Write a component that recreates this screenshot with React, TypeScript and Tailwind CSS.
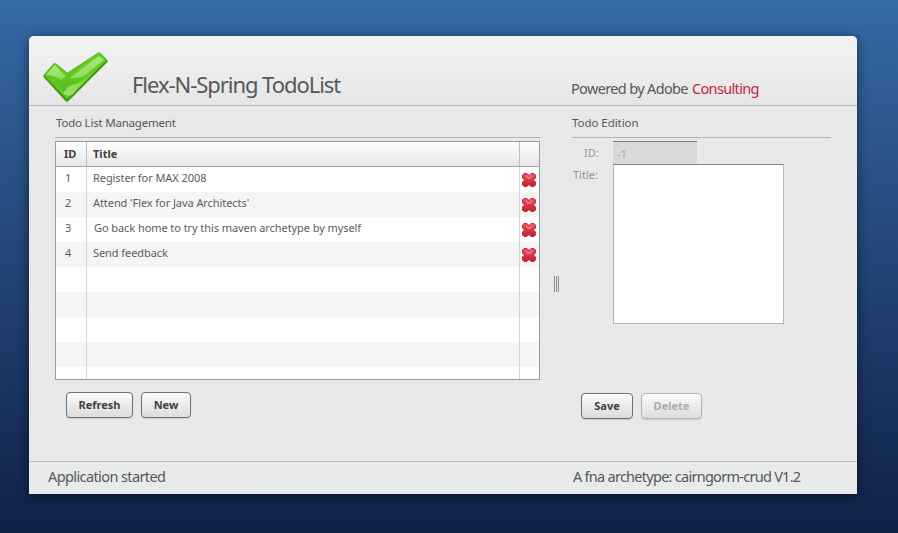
const font = { fontFamily: '"Noto Sans", "Open Sans", sans-serif' };

function CheckLogo() {
  return (
    <svg width="66" height="52" viewBox="0 0 66 52" className="block">
      <defs>
        <linearGradient id="g1" x1="0" y1="0" x2="0" y2="1">
          <stop offset="0" stopColor="#7fd640" />
          <stop offset="0.55" stopColor="#62c722" />
          <stop offset="1" stopColor="#56b814" />
        </linearGradient>
        <linearGradient id="g2" x1="0" y1="0" x2="0.4" y2="1">
          <stop offset="0" stopColor="#b9ea95" />
          <stop offset="1" stopColor="#8bdc55" />
        </linearGradient>
        <linearGradient id="g3" x1="0" y1="1" x2="1" y2="0">
          <stop offset="0" stopColor="#a8e87c" />
          <stop offset="1" stopColor="#6acd2b" />
        </linearGradient>
      </defs>
      <path d="M3 24 L12 14 L24 24 L56 3 L62 9 L24 47 Z" fill="#3f9a10" stroke="#3f9a10" strokeWidth="5" strokeLinejoin="round" />
      <path d="M3 23 L12 13 L24 23 L56 2 L62 8 L24 45 Z" fill="url(#g1)" stroke="#62c722" strokeWidth="3" strokeLinejoin="round" />
      <path d="M3 23 L12 13 L23 24 L18 28 Q11 23 3 23 Z" fill="url(#g2)" />
      <path d="M27 26 L56 4 L61 8 L41 24 Q33 27 27 26 Z" fill="url(#g2)" />
      <path d="M20 41 L26 34 Q38 32 48 21 L57 13 L29 43 Q24 45 20 41 Z" fill="url(#g3)" opacity="0.85" />
    </svg>
  );
}

function RedX() {
  return (
    <svg width="14" height="14" viewBox="0 0 14 14" className="block">
      <defs>
        <linearGradient id="x1" x1="0" y1="0" x2="0" y2="1">
          <stop offset="0" stopColor="#ee4d5c" />
          <stop offset="1" stopColor="#c31f31" />
        </linearGradient>
      </defs>
      <path d="M2 0.5 L5 0.5 L7 2.5 L9 0.5 L12 0.5 L13.5 2 L13.5 5 L11.5 7 L13.5 9 L13.5 12 L12 13.5 L9 13.5 L7 11.5 L5 13.5 L2 13.5 L0.5 12 L0.5 9 L2.5 7 L0.5 5 L0.5 2 Z" fill="url(#x1)" stroke="#a5202f" strokeWidth="0.8" />
      <path d="M3 2.5 L5 2.5 L7 4.5 L9 2.5 L11 2.5 L8.5 6 L5.5 6 Z" fill="#f79aa2" opacity="0.6" />
    </svg>
  );
}

const rows = [
  ["1", "Register for MAX 2008", "pl-[6px]"],
  ["2", "Attend 'Flex for Java Architects'", "pl-[6px]"],
  ["3", "Go back home to try this maven archetype by myself", "pl-[7px]"],
  ["4", "Send feedback", "pl-[6px]"],
  ["", "", ""],
  ["", "", ""],
  ["", "", ""],
  ["", "", ""],
  ["", "", ""],
];

function Btn({ label, w, disabled }: { label: string; w: string; disabled?: boolean }) {
  return (
    <button
      className={`h-[26px] ${w} rounded-[4px] border bg-gradient-to-b from-[#fbfbfb] to-[#dcdcdc] text-[11px] font-bold shadow-[0_1px_1px_rgba(0,0,0,0.12)] ${
        disabled ? "border-[#b4b4b4] text-[#a9acad]" : "border-[#6e7072] text-[#3f4144]"
      }`}
    >
      {label}
    </button>
  );
}

export default function App() {
  return (
    <div
      className="h-[533px] w-[898px] overflow-hidden bg-gradient-to-b from-[#376aa8] to-[#102248] pl-[29px] pt-[36px]"
      style={font}
    >
      <div className="flex h-[458px] w-[828px] flex-col overflow-hidden rounded-t-[5px] bg-[#e8e8e8] shadow-[0_2px_12px_rgba(0,0,0,0.55)]">
        <header className="flex h-[70px] shrink-0 border-b border-[#b9bbbb] bg-gradient-to-b from-[#f2f3f3] to-[#e6e6e6]">
          <div className="w-[103px] pl-[14px] pt-[16px]">
            <CheckLogo />
          </div>
          <div className="w-[439px] pt-[33px] text-[22px] leading-[30px] tracking-[-1.05px] text-[#55585b]">
            Flex-N-Spring TodoList
          </div>
          <div className="pt-[42px] text-[14.5px] leading-[20px] tracking-[-0.65px] text-[#55585b]">
            Powered by Adobe <span className="ml-[1px] text-[#c4243f]">Consulting</span>
          </div>
        </header>

        <main className="flex flex-1 pt-[9px]">
          <section className="ml-[26px] w-[485px]">
            <div className="h-[23px] border-b border-[#b4b6b6] pl-[1px] text-[11.5px] leading-[16px] tracking-[-0.2px] text-[#55585b]">
              Todo List Management
            </div>
            <div className="mt-[3px] h-[239px] overflow-hidden border border-[#9a9c9e] bg-white">
              <div className="flex h-[25px] border-b border-[#a5a7a9] bg-gradient-to-b from-[#ffffff] to-[#e6e6e6] text-[11px] font-bold leading-[24px] text-[#3f4144]">
                <div className="w-[31px] border-r border-[#bdbfc0] pl-[8px]">ID</div>
                <div className="w-[433px] border-r border-[#bdbfc0] pl-[6px]">Title</div>
                <div className="flex-1" />
              </div>
              {rows.map((r, i) => (
                <div
                  key={i}
                  className={`flex h-[25px] text-[11px] leading-[22px] tracking-[-0.07px] text-[#5a5d60] ${
                    i % 2 === 1 ? "bg-[#f5f5f5]" : "bg-white"
                  }`}
                >
                  <div className="w-[31px] border-r border-[#d4d4d4] pl-[9px]">{r[0]}</div>
                  <div className={`w-[433px] border-r border-[#d4d4d4] ${r[2]}`}>{r[1]}</div>
                  <div className="flex flex-1 justify-center pr-[2px] pt-[6px]">{r[0] && <RedX />}</div>
                </div>
              ))}
            </div>
            <div className="ml-[11px] mt-[12px] flex gap-[8px]">
              <Btn label="Refresh" w="w-[67px]" />
              <Btn label="New" w="w-[50px]" />
            </div>
          </section>

          <div className="flex w-[32px] items-start justify-center pt-[161px]">
            <div className="h-[16px] w-[5px] border-x border-[#8c8e90] after:mx-auto after:block after:h-full after:w-px after:bg-[#8c8e90] after:content-['']" />
          </div>

          <section className="w-[259px]">
            <div className="h-[23px] border-b border-[#b4b6b6] text-[11.5px] leading-[16px] tracking-[-0.05px] text-[#55585b]">
              Todo Edition
            </div>
            <div className="ml-[41px] mt-[3px] flex items-start">
              <div className="relative w-[84px]">
                <span className="absolute -left-[29px] top-[4px] text-[11px] leading-[15px] text-[#9a9c9e]">ID:</span>
                <input
                  disabled
                  value="-1"
                  readOnly
                  className="block h-[23px] w-[84px] border-t border-[#7f8183] bg-[#d9d9d9] pl-[4px] text-[11px] text-[#a9abad]"
                />
              </div>
            </div>
            <div className="ml-[41px] flex items-start">
              <div className="relative">
                <span className="absolute -left-[40px] top-[3px] text-[11px] leading-[15px] text-[#8f9193]">Title:</span>
                <div className="h-[160px] w-[171px] border border-[#b4b6b6] border-t-[#7f8183] bg-white" />
              </div>
            </div>
            <div className="ml-[9px] mt-[69px] flex gap-[8px]">
              <Btn label="Save" w="w-[52px]" />
              <Btn label="Delete" w="w-[61px]" disabled />
            </div>
          </section>
        </main>

        <footer className="flex h-[33px] shrink-0 border-t border-[#b9bbbb] bg-[#e9eaea] text-[14.5px] leading-[29px] text-[#55585b]">
          <div className="w-[544px] pl-[19px] tracking-[-0.6px]">Application started</div>
          <div className="tracking-[-0.73px]">A fna archetype: cairngorm-crud V1.2</div>
        </footer>
      </div>
    </div>
  );
}
